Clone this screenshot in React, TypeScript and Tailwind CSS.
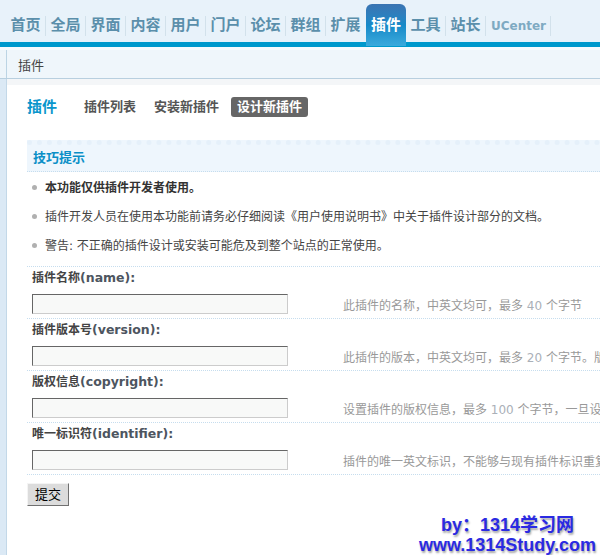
import React from "react";

const navItems = ["首页", "全局", "界面", "内容", "用户", "门户", "论坛", "群组", "扩展", "插件", "工具", "站长"];
const activeNav = "插件";

const fields = [
  { cn: "插件名称", en: "(name):", tip: ["此插件的名称，中英文均可，最多 ", "40", " 个字节"] },
  { cn: "插件版本号", en: "(version):", tip: ["此插件的版本，中英文均可，最多 ", "20", " 个字节。版本号高于原版本号的插件才可以升级"] },
  { cn: "版权信息", en: "(copyright):", tip: ["设置插件的版权信息，最多 ", "100", " 个字节，一旦设置将无法修改"] },
  { cn: "唯一标识符", en: "(identifier):", tip: ["插件的唯一英文标识，不能够与现有插件标识重复，可使用字母、数字、下划线命名", "", ""] },
];

function NavBar() {
  const activeIdx = navItems.indexOf(activeNav);
  return (
    <div className="flex h-[47px] items-end border-b-[5px] border-[#0099cc] bg-[#e8f2fa] pl-[6px]">
      {navItems.map((item, i) => {
        const active = item === activeNav;
        const showSep = !active && i !== activeIdx - 1;
        if (active) {
          return (
            <div
              key={item}
              className="relative z-10 -mb-[4px] flex h-[42px] w-[40px] items-center justify-center rounded-t-[6px] bg-gradient-to-b from-[#3a74b2] via-[#1589c8] to-[#3aaadc] pt-[1px] text-[15px] font-bold text-white"
            >
              {item}
            </div>
          );
        }
        return (
          <div key={item} className="flex h-[38px] w-[40px] items-center pt-[5px]">
            <span className="w-[39px] text-center text-[15px] font-bold text-[#5b8fab]">{item}</span>
            <span className={showSep ? "h-[20px] w-px bg-[#d2e1eb]" : "h-[20px] w-px"} />
          </div>
        );
      })}
      <div className="flex h-[38px] items-center pt-[5px] pl-[5px]">
        <span className="text-[12px] font-bold text-[#7eaac2]">UCenter</span>
        <span className="ml-[4px] h-[20px] w-px bg-[#d2e1eb]" />
      </div>
    </div>
  );
}

function FieldRow({ cn, en, tip }: { cn: string; en: string; tip: string[] }) {
  return (
    <div className="overflow-hidden whitespace-nowrap border-t border-dotted border-[#c6ddee] pb-[4px] pl-[5px] pt-[2px]">
      <div className="flex h-[18px] items-center text-[12px] font-bold leading-[18px] text-[#444]">
        {cn}
        <span className="text-[12.5px] text-[#4d5560]">{en}</span>
      </div>
      <div className="mt-[7px] flex h-[20px] items-center">
        <input
          type="text"
          className="h-[20px] w-[256px] shrink-0 border border-b-[#cccccc] border-l-[#666666] border-r-[#cccccc] border-t-[#666666] bg-[#f8f9f8] outline-none"
        />
        <span className="ml-[55px] pt-[3px] text-[12px] leading-[16px] text-[#999]">
          {tip[0]}
          <span className="text-[#aab0b8]">{tip[1]}</span>
          {tip[2]}
        </span>
      </div>
    </div>
  );
}

export default function App() {
  return (
    <div className="relative h-[555px] w-[600px] overflow-hidden bg-white font-['DejaVu_Sans','Noto_Sans_CJK_SC',sans-serif]">
      <NavBar />

      {/* breadcrumb */}
      <div className="flex h-[32px] border-b border-t-[3px] border-b-[#b8cfdf] border-t-[#f8fbfd] bg-[#eff6fb]">
        <div className="w-[7px] border-r border-[#bcd4e4] bg-[#eef5fa]" />
        <div className="flex items-center pl-[11px] pt-[3px] text-[13px] text-[#444]">插件</div>
      </div>

      <div className="flex h-full">
        <div className="w-[7px] shrink-0 border-r border-[#c3d8e8] bg-[#dbe9f5]" />
        <div className="flex-1 overflow-hidden">
          <div className="h-[6px] bg-[#f4f6f8]" />

          <div className="pl-[20px]">
            {/* title + tabs */}
            <div className="mt-[12px] flex h-[20px] items-center whitespace-nowrap">
              <span className="text-[15px] font-bold text-[#0a96cc]">插件</span>
              <span className="ml-[27px] text-[13px] font-bold text-[#555]">插件列表</span>
              <span className="ml-[18px] text-[13px] font-bold text-[#555]">安装新插件</span>
              <span className="ml-[12px] flex h-[20px] items-center rounded-[3px] bg-[#666] px-[6px] text-[13px] font-bold text-white">
                设计新插件
              </span>
            </div>

            {/* tips */}
            <div className="mt-[23px] border-b border-dotted border-[#c6ddee] border-t-[5px] border-t-[#e5f0fa] bg-[#eef6fd]">
              <div className="flex h-[26px] items-center pl-[6px] text-[13px] font-bold text-[#0a8fc7]">技巧提示</div>
            </div>
            <ul className="pb-[6px] pt-[1px] text-[12px] text-[#444]">
              {[
                { t: "本功能仅供插件开发者使用。", b: true },
                { t: "插件开发人员在使用本功能前请务必仔细阅读《用户使用说明书》中关于插件设计部分的文档。", b: false },
                { t: "警告: 不正确的插件设计或安装可能危及到整个站点的正常使用。", b: false },
              ].map((li) => (
                <li key={li.t} className="flex h-[29px] items-center whitespace-nowrap pl-[5px]">
                  <span className="mr-[8px] h-[5px] w-[5px] rounded-full bg-[#b0b0b0]" />
                  <span className={li.b ? "font-bold text-[#333]" : ""}>{li.t}</span>
                </li>
              ))}
            </ul>

            {fields.map((f) => (
              <FieldRow key={f.cn} {...f} />
            ))}
            <div className="border-t border-dotted border-[#c6ddee]" />

            <button className="mt-[8px] h-[23px] w-[42px] border border-b-[#707070] border-l-[#f4f4f4] border-r-[#707070] border-t-[#f4f4f4] bg-[#dcdcdc] text-[13px] leading-[21px] text-black">
              提交
            </button>
          </div>
        </div>
      </div>

      {/* watermark */}
      <div className="absolute bottom-0 right-[4px] text-center font-['Liberation_Sans','Noto_Sans_CJK_SC',sans-serif] text-[18px] font-bold leading-[20px] text-[#2a2ae2] [text-shadow:1px_2px_2px_#a8a8a8]">
        <div>by：1314学习网</div>
        <div>www.1314Study.com</div>
      </div>
    </div>
  );
}
